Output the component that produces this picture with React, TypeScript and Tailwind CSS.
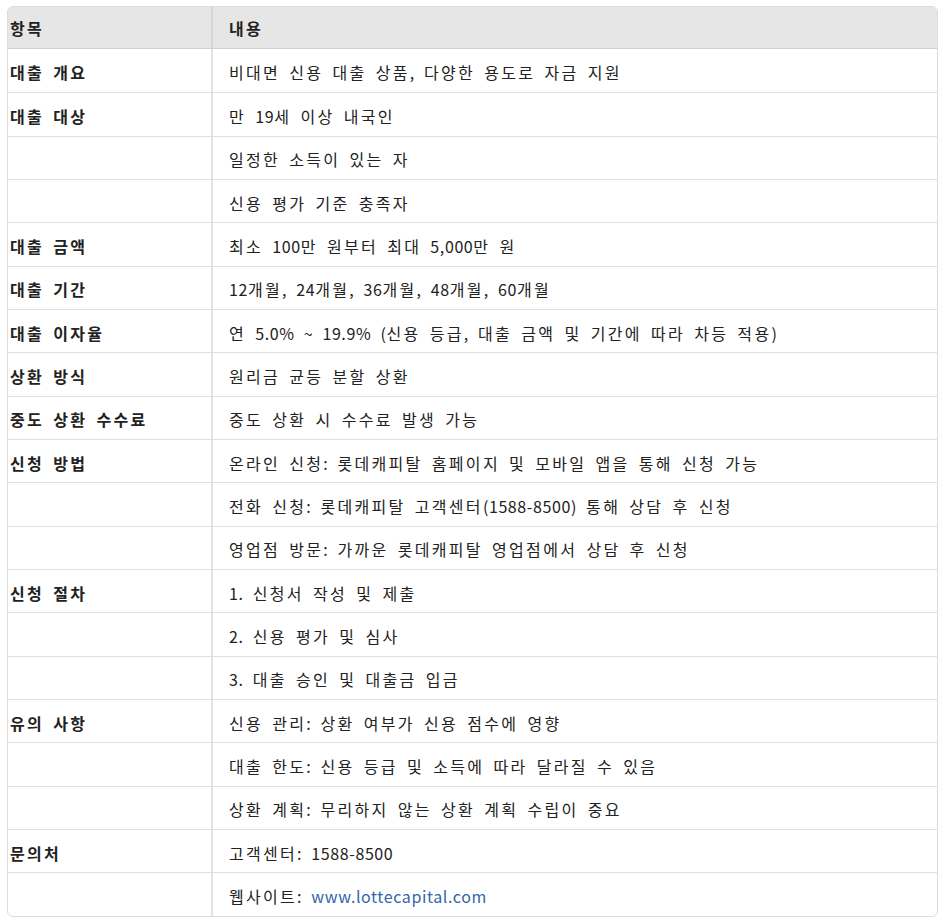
import React from "react";

type Row = { label?: string; content: string; link?: string };

const rows: Row[] = [
  { label: "대출 개요", content: "비대면 신용 대출 상품, 다양한 용도로 자금 지원" },
  { label: "대출 대상", content: "만 19세 이상 내국인" },
  { content: "일정한 소득이 있는 자" },
  { content: "신용 평가 기준 충족자" },
  { label: "대출 금액", content: "최소 100만 원부터 최대 5,000만 원" },
  { label: "대출 기간", content: "12개월, 24개월, 36개월, 48개월, 60개월" },
  { label: "대출 이자율", content: "연 5.0% ~ 19.9% (신용 등급, 대출 금액 및 기간에 따라 차등 적용)" },
  { label: "상환 방식", content: "원리금 균등 분할 상환" },
  { label: "중도 상환 수수료", content: "중도 상환 시 수수료 발생 가능" },
  { label: "신청 방법", content: "온라인 신청: 롯데캐피탈 홈페이지 및 모바일 앱을 통해 신청 가능" },
  { content: "전화 신청: 롯데캐피탈 고객센터(1588-8500) 통해 상담 후 신청" },
  { content: "영업점 방문: 가까운 롯데캐피탈 영업점에서 상담 후 신청" },
  { label: "신청 절차", content: "1. 신청서 작성 및 제출" },
  { content: "2. 신용 평가 및 심사" },
  { content: "3. 대출 승인 및 대출금 입금" },
  { label: "유의 사항", content: "신용 관리: 상환 여부가 신용 점수에 영향" },
  { content: "대출 한도: 신용 등급 및 소득에 따라 달라질 수 있음" },
  { content: "상환 계획: 무리하지 않는 상환 계획 수립이 중요" },
  { label: "문의처", content: "고객센터: 1588-8500" },
  { content: "웹사이트: ", link: "www.lottecapital.com" },
];

// 한글은 자간을 넓게, 영문/숫자는 조금만
function Txt({ text }: { text: string }) {
  const parts = text.split(/([\uAC00-\uD7A3]+)/).filter((p) => p !== "");
  return (
    <span className="whitespace-pre">
      {parts.map((p, i) =>
        /[\uAC00-\uD7A3]/.test(p) ? (
          <span key={i} className="tracking-[2.3px]">
            {p}
          </span>
        ) : (
          <span key={i} className="tracking-[0.6px]">
            {p}
          </span>
        )
      )}
    </span>
  );
}

export default function App() {
  return (
    <div
      className="bg-white min-h-screen pt-[6px] pl-[7px] text-[#222] text-[16px] [word-spacing:5px]"
      style={{ fontFamily: '"Noto Sans CJK KR", "Noto Sans", sans-serif' }}
    >
      <div className="w-[931px] border border-[#dcdcdc] rounded-md overflow-hidden">
        {/* 헤더 */}
        <div className="grid grid-cols-[205px_1fr] h-[42px] bg-[#e6e6e6] border-b border-[#cfcfcf] font-bold">
          <div className="flex items-center pl-[2px] border-r-2 border-[#d6d6d6]">
            <Txt text="항목" />
          </div>
          <div className="flex items-center pl-[16px]">
            <Txt text="내용" />
          </div>
        </div>
        {rows.map((r, i) => (
          <div
            key={i}
            className={`grid grid-cols-[205px_1fr] h-[43.33px] ${i > 0 ? "border-t border-[#e0e0e0]" : ""}`}
          >
            <div className="flex items-center pt-[3px] pl-[2px] font-bold border-r-2 border-[#e3e3e3]">
              {r.label && <Txt text={r.label} />}
            </div>
            <div className="flex items-center pt-[3px] pl-[16px]">
              <span className="whitespace-pre">
                <Txt text={r.content} />
                {r.link && (
                  <a href="#" className="text-[#3366aa] tracking-[0.6px]">
                    {r.link}
                  </a>
                )}
              </span>
            </div>
          </div>
        ))}
      </div>
    </div>
  );
}
